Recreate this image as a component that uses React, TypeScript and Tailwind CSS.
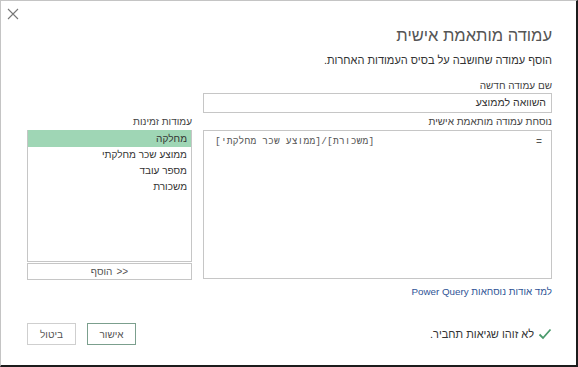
import type { JSX } from "react";

const columns = ["מחלקה", "ממוצע שכר מחלקתי", "מספר עובד", "משכורת"];

export default function App(): JSX.Element {
    return (
        <div
            dir="rtl"
            className="w-[578px] h-[367px] bg-white border-l border-t border-[#c4c4c4] border-r-2 border-b-2 border-r-[#1c1c1c] border-b-[#1c1c1c] flex flex-col pr-[24px] pl-[26px] text-[#444] font-['Liberation_Sans',sans-serif]"
        >
            <div className="h-[22px] flex justify-end items-start pt-[7px] -ml-[20px]">
                <svg width="12" height="12" viewBox="0 0 12 12" className="text-[#777]">
                    <path d="M1 1 L11 11 M11 1 L1 11" stroke="currentColor" strokeWidth="1.1" fill="none" />
                </svg>
            </div>
            <h1 className="h-[25px] leading-[25px] text-[16.5px] text-[#555] font-normal">עמודה מותאמת אישית</h1>
            <p className="mt-[4px] h-[16px] leading-[16px] text-[11px] text-[#333]">הוסף עמודה שחושבה על בסיס העמודות האחרות.</p>
            <label className="mt-[11px] h-[14px] leading-[14px] text-[10px]">שם עמודה חדשה</label>
            <div className="w-[349px] h-[20px] border border-[#c6c6c6] flex items-center px-[5px] text-[10.5px] text-[#333]">
                השוואה לממוצע
            </div>
            <div className="mt-[2px] flex gap-[11px]">
                <div className="w-[349px] flex flex-col">
                    <div className="h-[14px] leading-[14px] text-[10px] mb-[1px]">נוסחת עמודה מותאמת אישית</div>
                    <div className="h-[149px] border border-[#c6c6c6] flex justify-between items-start pt-[4px] pr-[9px] pl-[11px] text-[#555]">
                        <span className="text-[10px] font-['Liberation_Mono',monospace]">=</span>
                        <span className="text-[9.5px] font-['Liberation_Mono',monospace] tracking-[0.2px]">[משכורת]/[ממוצע שכר מחלקתי]</span>
                    </div>
                    <a className="mt-[6px] h-[14px] leading-[14px] text-[9.8px] text-[#2f5496]">למד אודות נוסחאות Power Query</a>
                </div>
                <div className="w-[165px] flex flex-col">
                    <div className="h-[14px] leading-[14px] text-[10px] mb-[1px]">עמודות זמינות</div>
                    <div className="h-[132px] border border-[#c6c6c6] border-t-0 flex flex-col text-[10px] text-[#333]">
                        {columns.map((c, i) => (
                            <div
                                key={c}
                                className={
                                    i === 0
                                        ? "h-[17px] leading-[17px] pr-[4px] bg-[#9fd6b5]"
                                        : "h-[16px] leading-[16px] pr-[4px]"
                                }
                            >
                                {c}
                            </div>
                        ))}
                    </div>
                    <button
                        dir="ltr"
                        className="mt-[1px] h-[17px] border border-[#c6c6c6] text-[10px] text-[#555] flex items-center justify-center gap-[4px]"
                    >
                        <span>הוסף</span>
                        <span>&gt;&gt;</span>
                    </button>
                </div>
            </div>
            <div className="mt-[24px] flex items-center justify-between">
                <div className="flex items-center gap-[4px] text-[11px] text-[#333]">
                    <svg width="14" height="12" viewBox="0 0 14 12">
                        <path d="M1.5 6.5 L5 10 L12.5 1.5" stroke="#4a9a6c" strokeWidth="1.8" fill="none" />
                    </svg>
                    <span>לא זוהו שגיאות תחביר.</span>
                </div>
                <div className="flex gap-[11px]">
                    <button className="w-[49px] h-[22px] border border-[#7b9f8d] text-[10px] text-[#555]">אישור</button>
                    <button className="w-[49px] h-[22px] border border-[#cfcfcf] text-[10px] text-[#555]">ביטול</button>
                </div>
            </div>
        </div>
    );
}
